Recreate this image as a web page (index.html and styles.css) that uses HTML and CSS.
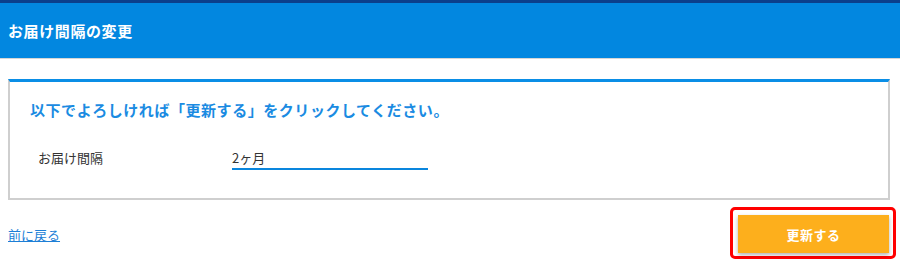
FILE: index.html
```html
<!DOCTYPE html>
<html lang="ja">
<head>
<meta charset="utf-8">
<title>お届け間隔の変更</title>
<link rel="stylesheet" href="styles.css">
</head>
<body>
<header class="hdr">
  <h1 class="hdr-title">お届け間隔の変更</h1>
</header>
<main class="main">
  <section class="box">
    <h2 class="lead">以下でよろしければ「更新する」をクリックしてください。</h2>
    <div class="row">
      <div class="label">お届け間隔</div>
      <div class="value">2ヶ月</div>
    </div>
  </section>
  <div class="actions">
    <a class="back" href="#">前に戻る</a>
    <div class="hl">
      <button class="btn" type="button">更新する</button>
    </div>
  </div>
</main>
</body>
</html>
```
FILE: styles.css
```css
* { box-sizing: border-box; }
html, body { margin: 0; padding: 0; background: #fff; }
body {
  font-family: "Noto Sans CJK JP", "Noto Sans", sans-serif;
  color: #333;
}
.hdr {
  border-top: 3px solid #0b3f8c;
  background: #0287e0;
  height: 58px;
  display: flex;
  align-items: center;
  padding-left: 8px;
  box-shadow: 0 1px 0 #d6d6d6;
}
.hdr-title {
  margin: 0;
  color: #fff;
  font-size: 15px;
  font-weight: 700;
  line-height: 20px;
  letter-spacing: 0.6px;
}
.main {
  padding: 0 10px 0 8px;
}
.box {
  margin-top: 21px;
  border: 2px solid #cfcfcf;
  border-top: 3px solid #0a8ee6;
  padding: 17px 20px 28px 20px;
}
.lead {
  margin: 0;
  color: #1a8be2;
  font-size: 15px;
  font-weight: 700;
  line-height: 22px;
  letter-spacing: 0.55px;
}
.row {
  display: flex;
  align-items: flex-start;
  margin-top: 27px;
  padding-left: 8px;
}
.label {
  width: 194px;
  font-size: 13px;
  line-height: 20px;
  color: #333;
}
.value {
  width: 196px;
  font-size: 13px;
  line-height: 20px;
  border-bottom: 2px solid #0a86dd;
  color: #333;
}
.actions {
  display: flex;
  justify-content: space-between;
  align-items: center;
  margin-top: 7px;
}
.back {
  color: #1d7fd6;
  font-size: 13px;
  line-height: 20px;
  text-decoration: underline;
  padding-top: 3px;
}
.hl {
  border: 3px solid #ff0000;
  border-radius: 5px;
  padding: 5px 4px 3px 5px;
  margin-right: -6px;
}
.btn {
  display: block;
  width: 151px;
  height: 38px;
  border: 0;
  background: #fdaf1c;
  color: #fff;
  font-family: inherit;
  font-size: 13px;
  font-weight: 700;
  letter-spacing: 0.5px;
  box-shadow: 0 2px 4px rgba(0, 0, 0, 0.3);
  cursor: pointer;
}
```
